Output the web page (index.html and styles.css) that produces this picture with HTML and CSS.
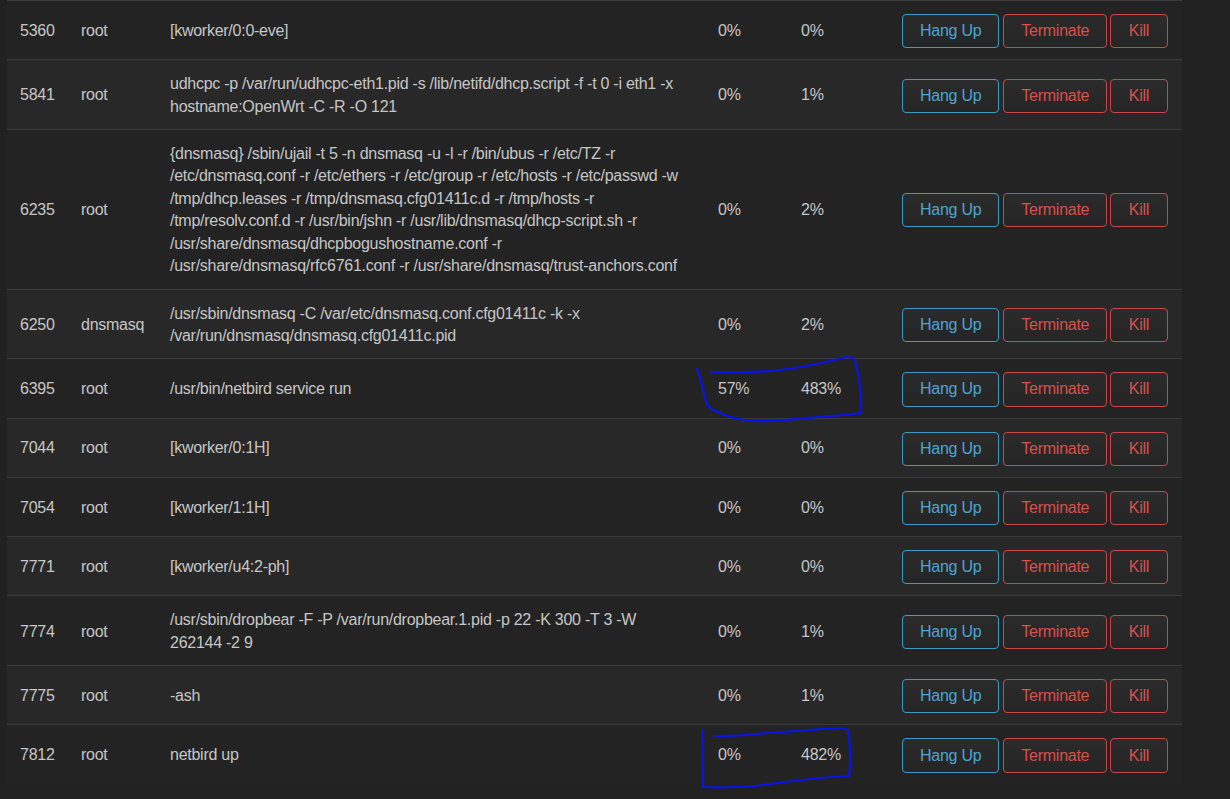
FILE: index.html
```html
<!DOCTYPE html>
<html>
<head>
<meta charset="utf-8">
<link rel="stylesheet" href="styles.css">
</head>
<body>
<div class="page">
  <table class="proc">
    <colgroup>
      <col class="c-pid"><col class="c-user"><col class="c-cmd"><col class="c-cpu"><col class="c-mem"><col class="c-act">
    </colgroup>
    <tbody>
      <tr class="odd">
        <td>5360</td><td>root</td><td class="cmd">[kworker/0:0-eve]</td><td>0%</td><td>0%</td>
        <td><div class="acts"><button class="btn blue">Hang Up</button><button class="btn red">Terminate</button><button class="btn red kill">Kill</button></div></td>
      </tr>
      <tr class="even">
        <td>5841</td><td>root</td><td class="cmd">udhcpc -p /var/run/udhcpc-eth1.pid -s /lib/netifd/dhcp.script -f -t 0 -i eth1 -x<br>hostname:OpenWrt -C -R -O 121</td><td>0%</td><td>1%</td>
        <td><div class="acts"><button class="btn blue">Hang Up</button><button class="btn red">Terminate</button><button class="btn red kill">Kill</button></div></td>
      </tr>
      <tr class="odd">
        <td>6235</td><td>root</td><td class="cmd">{dnsmasq} /sbin/ujail -t 5 -n dnsmasq -u -l -r /bin/ubus -r /etc/TZ -r<br>/etc/dnsmasq.conf -r /etc/ethers -r /etc/group -r /etc/hosts -r /etc/passwd -w<br>/tmp/dhcp.leases -r /tmp/dnsmasq.cfg01411c.d -r /tmp/hosts -r<br>/tmp/resolv.conf.d -r /usr/bin/jshn -r /usr/lib/dnsmasq/dhcp-script.sh -r<br>/usr/share/dnsmasq/dhcpbogushostname.conf -r<br>/usr/share/dnsmasq/rfc6761.conf -r /usr/share/dnsmasq/trust-anchors.conf</td><td>0%</td><td>2%</td>
        <td><div class="acts"><button class="btn blue">Hang Up</button><button class="btn red">Terminate</button><button class="btn red kill">Kill</button></div></td>
      </tr>
      <tr class="even">
        <td>6250</td><td>dnsmasq</td><td class="cmd">/usr/sbin/dnsmasq -C /var/etc/dnsmasq.conf.cfg01411c -k -x<br>/var/run/dnsmasq/dnsmasq.cfg01411c.pid</td><td>0%</td><td>2%</td>
        <td><div class="acts"><button class="btn blue">Hang Up</button><button class="btn red">Terminate</button><button class="btn red kill">Kill</button></div></td>
      </tr>
      <tr class="odd">
        <td>6395</td><td>root</td><td class="cmd">/usr/bin/netbird service run</td><td>57%</td><td>483%</td>
        <td><div class="acts"><button class="btn blue">Hang Up</button><button class="btn red">Terminate</button><button class="btn red kill">Kill</button></div></td>
      </tr>
      <tr class="even">
        <td>7044</td><td>root</td><td class="cmd">[kworker/0:1H]</td><td>0%</td><td>0%</td>
        <td><div class="acts"><button class="btn blue">Hang Up</button><button class="btn red">Terminate</button><button class="btn red kill">Kill</button></div></td>
      </tr>
      <tr class="odd">
        <td>7054</td><td>root</td><td class="cmd">[kworker/1:1H]</td><td>0%</td><td>0%</td>
        <td><div class="acts"><button class="btn blue">Hang Up</button><button class="btn red">Terminate</button><button class="btn red kill">Kill</button></div></td>
      </tr>
      <tr class="even">
        <td>7771</td><td>root</td><td class="cmd">[kworker/u4:2-ph]</td><td>0%</td><td>0%</td>
        <td><div class="acts"><button class="btn blue">Hang Up</button><button class="btn red">Terminate</button><button class="btn red kill">Kill</button></div></td>
      </tr>
      <tr class="odd">
        <td>7774</td><td>root</td><td class="cmd">/usr/sbin/dropbear -F -P /var/run/dropbear.1.pid -p 22 -K 300 -T 3 -W<br>262144 -2 9</td><td>0%</td><td>1%</td>
        <td><div class="acts"><button class="btn blue">Hang Up</button><button class="btn red">Terminate</button><button class="btn red kill">Kill</button></div></td>
      </tr>
      <tr class="even">
        <td>7775</td><td>root</td><td class="cmd">-ash</td><td>0%</td><td>1%</td>
        <td><div class="acts"><button class="btn blue">Hang Up</button><button class="btn red">Terminate</button><button class="btn red kill">Kill</button></div></td>
      </tr>
      <tr class="odd">
        <td>7812</td><td>root</td><td class="cmd">netbird up</td><td>0%</td><td>482%</td>
        <td><div class="acts"><button class="btn blue">Hang Up</button><button class="btn red">Terminate</button><button class="btn red kill">Kill</button></div></td>
      </tr>
    </tbody>
  </table>
  <svg class="marks" width="1230" height="799" viewBox="0 0 1230 799" aria-hidden="true">
    <path d="M697 369 C701 380 704 395 707 405 C712 411 730 419 752 421 C780 422 805 418 830 416 C845 415 855 414 861 413 C861 395 859 375 855 361 C852 357 849 357 846 357 C830 361 805 368 770 371 C745 373 725 372 711 372" />
    <path d="M702 730 C703 750 703 770 703 787 C720 788 740 787 755 786 C790 781 820 777 849 776 C851 760 850 745 848 731 C846 728 842 728 838 728 C810 730 780 732 755 734 C740 736 725 736 714 736" />
  </svg>
</div>
</body>
</html>
```
FILE: styles.css
```css
html, body {
  margin: 0;
  padding: 0;
  background: #212121;
}
body {
  font-family: "Liberation Sans", Arial, sans-serif;
  font-size: 16px;
  line-height: 22.4px;
  letter-spacing: -0.26px;
  color: #c6c6c6;
  width: 1230px;
  height: 799px;
  overflow: hidden;
}
.page {
  position: relative;
  padding-left: 7px;
}
.proc {
  width: 1175px;
  table-layout: fixed;
  border-collapse: collapse;
  border-spacing: 0;
}
.c-pid { width: 61px; }
.c-user { width: 89px; }
.c-cmd { width: 548px; }
.c-cpu { width: 83px; }
.c-mem { width: 101px; }
.c-act { width: 293px; }
.proc tr {
  border-top: 1px solid #3b3b3b;
}
.odd { background: #232323; }
.even { background: #282828; }
.proc td {
  padding: 13px 0 11px 13px;
  vertical-align: middle;
  white-space: nowrap;
}
.acts {
  display: flex;
  gap: 3px;
}
.btn {
  box-sizing: border-box;
  height: 34.25px;
  padding: 0 17px;
  font-family: "Liberation Sans", Arial, sans-serif;
  font-size: 16px;
  letter-spacing: -0.26px;
  line-height: 32px;
  background: linear-gradient(#2b2b2b, #252525);
  border: 1px solid;
  border-radius: 4px;
  cursor: pointer;
}
.blue {
  color: #4aa6d2;
  border-color: #3a9cc4;
  margin-right: 1px;
}
.red {
  color: #d9504c;
  border-color: #c9474a;
}
.kill {
  padding: 0 17.5px;
}
.marks {
  position: absolute;
  left: 0;
  top: 0;
  pointer-events: none;
}
.marks path {
  fill: none;
  stroke: #0a14e6;
  stroke-width: 2.2;
  stroke-linecap: round;
  stroke-linejoin: round;
}
```
